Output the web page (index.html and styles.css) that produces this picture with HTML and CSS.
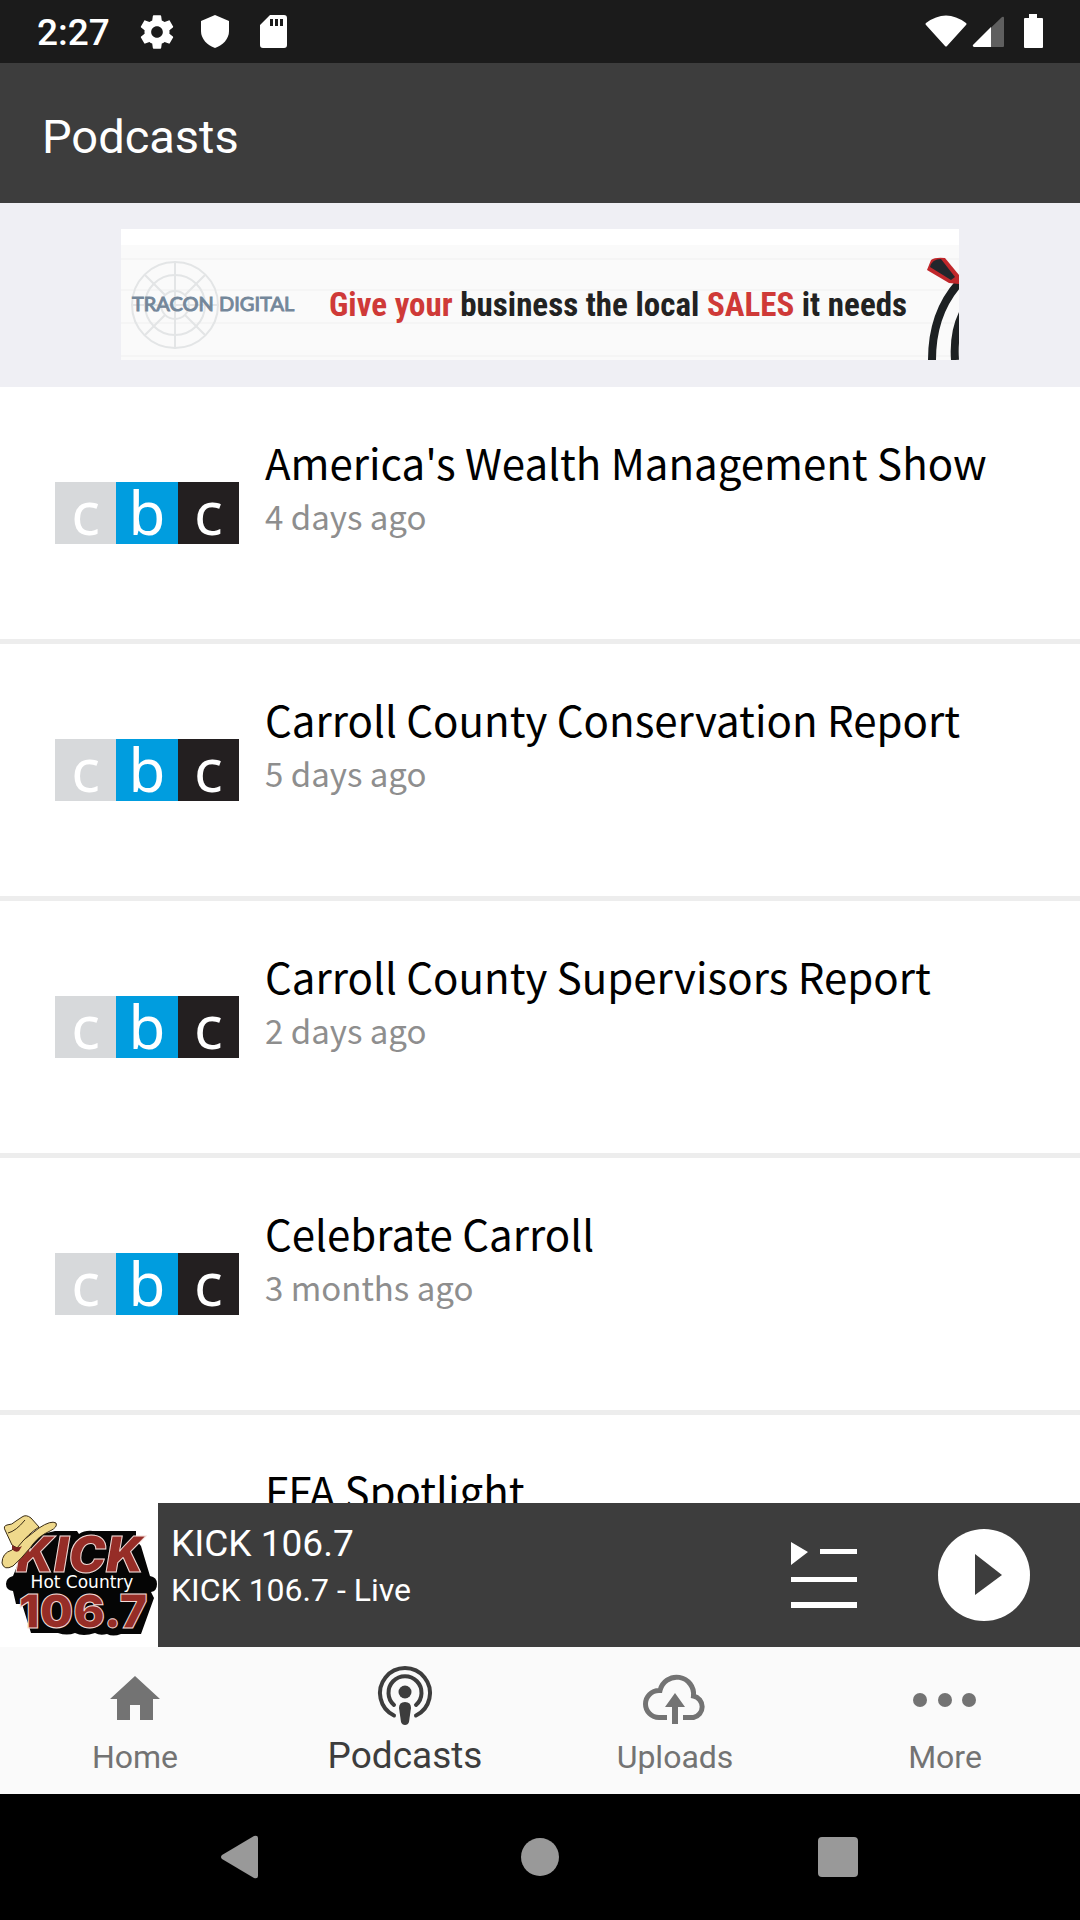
FILE: index.html
```html
<!DOCTYPE html>
<html lang="en">
<head>
    <meta charset="UTF-8">
    <meta name="viewport" content="width=device-width, initial-scale=1.0">
    <title>Podcasts</title>
    <link rel="stylesheet" href="styles.css">
</head>
<body>
    <div class="status-bar">
        <span class="clock">2:27</span>
        <div class="status-icons">
            <svg class="status-icon" viewBox="0 0 24 24"><path d="M19.43 12.98c.04-.32.07-.64.07-.98s-.03-.66-.07-.98l2.11-1.65c.19-.15.24-.42.12-.64l-2-3.46c-.12-.22-.39-.3-.61-.22l-2.49 1c-.52-.4-1.08-.73-1.69-.98l-.38-2.65C14.46 2.18 14.25 2 14 2h-4c-.25 0-.46.18-.49.42l-.38 2.65c-.61.25-1.17.59-1.69.98l-2.49-1c-.23-.09-.49 0-.61.22l-2 3.46c-.13.22-.07.49.12.64l2.11 1.65c-.04.32-.07.65-.07.98s.03.66.07.98l-2.11 1.65c-.19.15-.24.42-.12.64l2 3.46c.12.22.39.3.61.22l2.49-1c.52.4 1.08.73 1.69.98l.38 2.65c.03.24.24.42.49.42h4c.25 0 .46-.18.49-.42l.38-2.65c.61-.25 1.17-.59 1.69-.98l2.49 1c.23.09.49 0 .61-.22l2-3.46c.12-.22.07-.49-.12-.64l-2.11-1.65zM12 15.5c-1.93 0-3.5-1.57-3.5-3.5s1.57-3.5 3.5-3.5 3.5 1.57 3.5 3.5-1.57 3.5-3.5 3.5z"/></svg>
            <svg class="status-icon" viewBox="0 0 40 40"><path d="M20 3l14 6v10c0 8-6 14-14 17C12 33 6 27 6 19V9z"/></svg>
            <svg class="status-icon" viewBox="0 0 40 40"><path fill-rule="evenodd" d="M17 3h14q3 0 3 3v27q0 3-3 3H10q-3 0-3-3V13zM17 7v7h3V7zM22 7v7h3V7zM27 7v7h3V7z"/></svg>
        </div>
        <svg class="signal-icons" viewBox="0 0 120 36">
            <path d="M1 9Q21-6 41 9q1 1 0 2L22 32q-1 1-2 0L1 11q-1-1 0-2z"/>
            <path d="M48 31L77 3q2-1 2 1v28q0 1-1 1H49q-2-1-1-2z" opacity=".3"/>
            <path d="M48 31l18-18v20H49q-2-1-1-2z"/>
            <path d="M104 0h8v4h5q1 0 1 1v28q0 1-1 1h-17q-1 0-1-1V5q0-1 1-1h4z"/>
        </svg>
    </div>

    <header class="app-bar">
        <h1>Podcasts</h1>
    </header>

    <div class="ad">
        <a href="#" class="ad-link" aria-label="Tracon Digital">
            <svg viewBox="0 0 838 131">
                <rect width="838" height="131" fill="#fafafa"/>
                <rect width="838" height="16" fill="#fff"/>
                <path d="M0 30h838M0 61h838M0 94h838M0 127h838" stroke="#f5f5f5" stroke-width="2"/>
                <g fill="none" stroke="#e3e5e6" stroke-width="2">
                    <circle cx="54" cy="76" r="43"/>
                    <circle cx="54" cy="76" r="30"/>
                    <circle cx="54" cy="76" r="14"/>
                    <path d="M54 32v88M11 76h86M24 46l20 20M84 46L64 66M24 106l20-20M84 106L64 86"/>
                </g>
                <text x="11" y="82" class="ad-brand">TRACON DIGITAL</text>
                <text x="208" y="87" class="ad-text"><tspan class="ad-red">Give your</tspan> business the local <tspan class="ad-red">SALES</tspan> it needs</text>
                <path d="M811 131Q811 84 838 54M834 131Q832 104 842 84" fill="none" stroke="#1c2022" stroke-width="8"/>
                <path d="M806 41l4-10q4-3 14-2l14 17v9l-10-1z" fill="#c0272b"/>
                <path d="M809 38q2-8 11-8l14 18-4 3z" fill="#22262c"/>
            </svg>
        </a>
    </div>

    <main class="podcast-list">
        <a href="#" class="podcast">
            <div class="podcast-logo"><span>c</span><span>b</span><span>c</span></div>
            <div class="podcast-info">
                <h2>America's Wealth Management Show</h2>
                <p>4 days ago</p>
            </div>
        </a>
        <a href="#" class="podcast">
            <div class="podcast-logo"><span>c</span><span>b</span><span>c</span></div>
            <div class="podcast-info">
                <h2>Carroll County Conservation Report</h2>
                <p>5 days ago</p>
            </div>
        </a>
        <a href="#" class="podcast">
            <div class="podcast-logo"><span>c</span><span>b</span><span>c</span></div>
            <div class="podcast-info">
                <h2>Carroll County Supervisors Report</h2>
                <p>2 days ago</p>
            </div>
        </a>
        <a href="#" class="podcast">
            <div class="podcast-logo"><span>c</span><span>b</span><span>c</span></div>
            <div class="podcast-info">
                <h2>Celebrate Carroll</h2>
                <p>3 months ago</p>
            </div>
        </a>
        <a href="#" class="podcast">
            <div class="podcast-logo"></div>
            <div class="podcast-info">
                <h2>FFA Spotlight</h2>
            </div>
        </a>
    </main>

    <section class="player">
        <svg class="station-logo" viewBox="0 0 158 144">
            <rect width="158" height="144" fill="#fff"/>
            <path d="M38 32l17-4h22l2 3q6-4 14-3h43v9l5 6 9 30q7 1 7 8t-6 8l3 6-13 36h-20q-8 3-14 0-7 2-12-1-12 4-20 0-8 3-17 0H31l-9-29h-6l-3-13q-7-1-7-7t7-8l12-29z" fill="#050505"/>
            <text x="80" y="69" class="logo-kick">KICK</text>
            <text x="82" y="85" class="logo-hot">Hot Country</text>
            <text x="83" y="125" class="logo-freq">106.7</text>
            <g fill="#efd98c" stroke="#3a2c14" stroke-linejoin="round">
                <path d="M12 47Q2 50 2 60q2 8 11 3 8-7 17-18 8-12 20-17 8-4 6-8-5-3-17 5L16 43z"/>
                <path d="M12 42L5 27q-2-4 2-5 5 0 9-4l6-4q4-3 9 1l8 9q-10 6-22 21z"/>
                <path d="M8 30q8-2 17-13" fill="none"/>
            </g>
            <path d="M12 42q5 4 10 1l-3 5q-4 2-7-2z" fill="#7d2320"/>
        </svg>
        <div class="now-playing">
            <p class="station">KICK 106.7</p>
            <p class="track">KICK 106.7 - Live</p>
        </div>
        <button class="player-button" aria-label="Queue">
            <svg class="queue-icon" viewBox="0 0 66 66"><path d="M0 0l17 10L0 23zM29 7h37v5H29zM0 35h66v5H0zM0 60h66v6H0z"/></svg>
        </button>
        <button class="player-button" aria-label="Play">
            <svg class="play-icon" viewBox="0 0 92 92"><circle cx="46" cy="46" r="46" fill="#fff"/><path d="M37 25l27 21-27 20z" fill="#3d3d3d"/></svg>
        </button>
    </section>

    <nav class="tabs">
        <a href="#" class="tab">
            <svg class="tab-icon" viewBox="0 0 64 64"><path d="M32 11l25 23h-7v21H37V40H27v15H14V34H7z"/></svg>
            <span>Home</span>
        </a>
        <a href="#" class="tab active">
            <svg class="tab-icon" viewBox="0 0 64 64">
                <path d="M21 50.500A25 25 0 1 1 43 50.500M21 40A16.500 16.500 0 1 1 43 40" fill="none" stroke="currentColor" stroke-width="4" stroke-linecap="round"/>
                <circle cx="32" cy="27" r="6.500"/>
                <path d="M26 43q0-6 6-6t6 6l-2 14q-1 3-4 3t-4-3z"/>
            </svg>
            <span>Podcasts</span>
        </a>
        <a href="#" class="tab">
            <svg class="tab-icon" viewBox="0 0 64 64">
                <path d="M24 52.500H16a13 13 0 0 1 0-27h1A17 17 0 0 1 50.500 31a11 11 0 0 1 0 21.500H40" fill="none" stroke="currentColor" stroke-width="5"/>
                <path d="M32 28l10 14h-7v17h-6V42h-7z"/>
            </svg>
            <span>Uploads</span>
        </a>
        <a href="#" class="tab">
            <svg class="tab-icon" viewBox="0 0 64 64"><circle cx="7" cy="35" r="7"/><circle cx="32" cy="35" r="7"/><circle cx="56" cy="35" r="7"/></svg>
            <span>More</span>
        </a>
    </nav>

    <div class="system-nav">
        <button aria-label="Back"><svg viewBox="0 0 44 44"><path d="M3 20L35 1q4-1 4 2v38q0 3-4 2L3 24q-2-2 0-4z"/></svg></button>
        <button aria-label="Home"><svg viewBox="0 0 44 44"><circle cx="22" cy="22" r="19"/></svg></button>
        <button aria-label="Recents"><svg viewBox="0 0 44 44"><rect x="1" y="2" width="40" height="40" rx="4"/></svg></button>
    </div>
</body>
</html>
```
FILE: styles.css
```css
* {
    box-sizing: border-box;
}
body {
    margin: 0;
    height: 100vh;
    display: flex;
    flex-direction: column;
    overflow: hidden;
    background-color: white;
    font-family: Roboto, sans-serif;
}
h1, h2, p {
    margin: 0;
    font-weight: 400;
}
a {
    color: inherit;
    text-decoration: none;
}
button {
    background: none;
    border: none;
    padding: 0;
    cursor: pointer;
}
svg {
    display: block;
    fill: currentColor;
}

/* Top bars */
.status-bar {
    flex: none;
    display: flex;
    align-items: center;
    height: 63px;
    padding: 0 35px 0 37px;
    background-color: #1b1b1b;
    color: white;
}
.clock {
    padding-top: 2px;
    font-size: 37px;
    font-weight: 500;
}
.status-icons {
    display: flex;
    gap: 18px;
    margin-left: 27px;
}
.status-icon {
    width: 40px;
    height: 40px;
}
.signal-icons {
    width: 120px;
    height: 36px;
    margin-left: auto;
}
.app-bar {
    flex: none;
    display: flex;
    align-items: center;
    height: 140px;
    padding: 6px 42px 0;
    background-color: #3d3d3d;
    color: white;
}
.app-bar h1 {
    font-size: 47px;
}

/* Ad banner */
.ad {
    flex: none;
    display: flex;
    justify-content: center;
    padding: 26px 0 27px;
    background-color: #efeff4;
}
.ad-link {
    width: 838px;
    max-width: 100%;
}
.ad-brand {
    font-family: Lato, sans-serif;
    font-size: 20px;
    fill: #74879a;
    stroke: #74879a;
}
.ad-text {
    font-family: "Roboto Condensed", "Liberation Sans Narrow", sans-serif;
    font-size: 33px;
    font-weight: 700;
    fill: #222;
}
.ad-red {
    fill: #cf3a38;
}

/* Podcast list */
.podcast-list {
    flex: 1;
    min-height: 0;
    overflow: hidden;
    font-family: "Noto Sans CJK SC", sans-serif;
}
.podcast {
    display: flex;
    align-items: center;
    gap: 26px;
    height: 257px;
    padding: 0 55px;
    border-bottom: 5px solid #ededed;
}
.podcast-logo {
    flex: none;
    display: flex;
    width: 184px;
    height: 62px;
    font-family: "Noto Sans", sans-serif;
    font-size: 60px;
    line-height: 60px;
    text-align: center;
    color: white;
}
.podcast-logo span {
    flex: 1;
    background-color: #d7d9db;
}
.podcast-logo span:nth-child(2) {
    background-color: #009ddf;
}
.podcast-logo span:nth-child(3) {
    background-color: #231f20;
}
.podcast-info {
    align-self: flex-start;
    padding-top: 46px;
    white-space: nowrap;
}
.podcast-info h2 {
    font-size: 42px;
    line-height: 58px;
    color: black;
}
.podcast-info p {
    font-size: 33px;
    line-height: 50px;
    color: #8e8e8e;
}

/* Player */
.player {
    flex: none;
    display: flex;
    align-items: center;
    height: 144px;
    padding-right: 50px;
    background-color: #3d3d3d;
    color: white;
}
.station-logo {
    width: 158px;
    height: 144px;
}
.logo-kick, .logo-freq {
    font-family: Inter, sans-serif;
    font-weight: 900;
    text-anchor: middle;
    fill: #962d27;
    stroke: #f3dcd8;
    stroke-width: 1px;
}
.logo-kick {
    font-size: 50px;
    font-style: italic;
}
.logo-freq {
    font-size: 47px;
}
.logo-hot {
    font-family: "DejaVu Sans", sans-serif;
    font-size: 17px;
    text-anchor: middle;
    fill: white;
}
.now-playing {
    flex: 1;
    align-self: flex-start;
    padding: 19px 0 0 13px;
}
.station {
    font-size: 37px;
    line-height: 44px;
}
.track {
    font-size: 32px;
    line-height: 48px;
}
.player-button {
    margin-left: 81px;
    color: white;
}
.queue-icon {
    width: 66px;
    height: 66px;
}
.play-icon {
    width: 92px;
    height: 92px;
}

/* Bottom tabs */
.tabs {
    flex: none;
    display: flex;
    height: 147px;
    background-color: #fafafa;
}
.tab {
    flex: 1;
    display: flex;
    flex-direction: column;
    align-items: center;
    padding-top: 18px;
    font-size: 32px;
    line-height: 56px;
    color: #737373;
}
.tab.active {
    font-size: 37px;
    line-height: 54px;
    color: #3d3d3d;
}
.tab-icon {
    width: 64px;
    height: 64px;
}

/* System navigation */
.system-nav {
    flex: none;
    display: flex;
    justify-content: center;
    align-items: center;
    gap: 255px;
    height: 126px;
    background-color: black;
    color: #999;
}
.system-nav button {
    color: inherit;
}
.system-nav svg {
    width: 44px;
    height: 44px;
}
```
